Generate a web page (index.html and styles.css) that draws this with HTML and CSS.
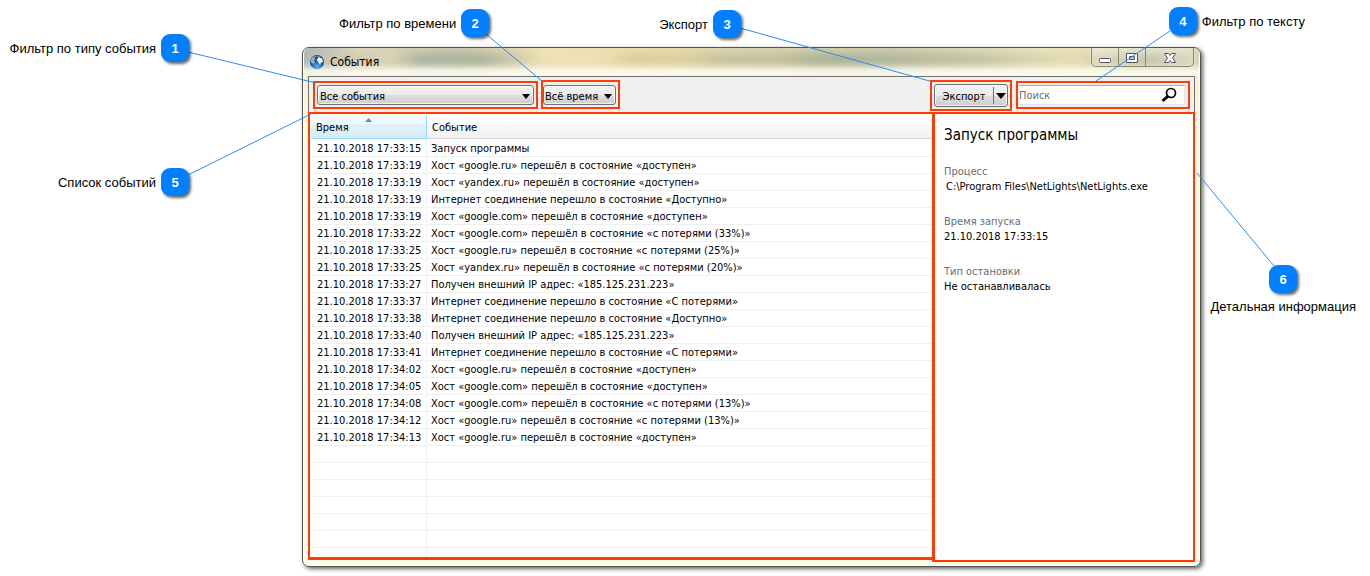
FILE: index.html
```html
<!DOCTYPE html>
<html lang="ru">
<head>
<meta charset="utf-8">
<title>События</title>
<link rel="stylesheet" href="styles.css">
</head>
<body>
<div class="stage">
  <main class="window">
    <header class="titlebar">
      <svg class="app-icon" width="16" height="16" viewBox="0 0 16 16" aria-hidden="true">
        <defs>
          <radialGradient id="globe" cx="0.5" cy="0.85" r="0.9">
            <stop offset="0" stop-color="#5fb4ee"/>
            <stop offset="0.45" stop-color="#1c5fa4"/>
            <stop offset="1" stop-color="#0a2450"/>
          </radialGradient>
        </defs>
        <circle cx="8" cy="8" r="7" fill="url(#globe)"/>
        <path d="M1.500 7Q2 3.500 4.500 2.500L6.500 4L5 6.500L6 8L4.500 10Q2.500 9.500 1.500 7Z" fill="#8fb4d2"/>
        <path d="M7.500 5.500L10 3L13 4.500L14 8L12 8.500L11 11L9.500 8.500Z" fill="#eef6fb"/>
        <path d="M4 3Q8 0 12 3Q8 2.500 4 3Z" fill="#ffffff" opacity="0.5"/>
      </svg>
      <h1 class="caption">События</h1>
      <div class="window-buttons">
        <button class="wb" type="button" aria-label="Свернуть">
          <svg width="14" height="14" viewBox="0 0 14 14"><rect x="1.500" y="7.500" width="11" height="4" rx="1" fill="#fff" stroke="#53555c"/></svg>
        </button>
        <button class="wb" type="button" aria-label="Развернуть">
          <svg width="14" height="14" viewBox="0 0 14 14"><path d="M1.500 2.500h11v9h-11zM4.500 5.500v3h5v-3z" fill="#fff" fill-rule="evenodd" stroke="#53555c"/></svg>
        </button>
        <button class="wb wb-close" type="button" aria-label="Закрыть">
          <svg width="14" height="14" viewBox="0 0 14 14"><path d="M1.500 2.500h4l1.500 2 1.500-2h4L9.500 7l3 4.500h-4L7 9.500l-1.500 2h-4L4.500 7z" fill="#fff" stroke="#53555c" stroke-linejoin="round"/></svg>
        </button>
      </div>
    </header>

    <div class="toolbar">
      <div class="mark mark-type">
        <div class="combo">
          <select aria-label="Фильтр по типу события"><option>Все события</option></select>
          <svg class="arrow" width="8" height="5" viewBox="0 0 8 5"><path d="M0 0h8L4 5z"/></svg>
        </div>
      </div>
      <div class="mark mark-time">
        <div class="combo">
          <select aria-label="Фильтр по времени"><option>Всё время</option></select>
          <svg class="arrow" width="8" height="5" viewBox="0 0 8 5"><path d="M0 0h8L4 5z"/></svg>
        </div>
      </div>
      <div class="mark mark-export">
        <div class="split">
          <button class="split-main" type="button">Экспорт</button>
          <button class="split-menu" type="button" aria-label="Варианты экспорта">
            <svg width="10" height="6" viewBox="0 0 10 6"><path d="M0 0h10L5 6z"/></svg>
          </button>
        </div>
      </div>
      <div class="mark mark-search">
        <div class="search">
          <input type="text" placeholder="Поиск" aria-label="Поиск">
          <svg width="16" height="16" viewBox="0 0 16 16" aria-hidden="true"><circle cx="10" cy="6" r="4.500" fill="none" stroke="#000" stroke-width="1.700"/><path d="M6.700 9.300L1.500 14" stroke="#000" stroke-width="3"/></svg>
        </div>
      </div>
    </div>

    <div class="panes">
      <section class="list">
        <table>
          <thead>
            <tr><th class="sorted" scope="col"><svg class="sort" width="7" height="4" viewBox="0 0 7 4"><path d="M0 4L3.500 0L7 4z" fill="#5f93ad"/></svg>Время</th><th scope="col">Событие</th></tr>
          </thead>
          <tbody>
            <tr><td>21.10.2018 17:33:15</td><td>Запуск программы</td></tr>
            <tr><td>21.10.2018 17:33:19</td><td>Хост «google.ru» перешёл в состояние «доступен»</td></tr>
            <tr><td>21.10.2018 17:33:19</td><td>Хост «yandex.ru» перешёл в состояние «доступен»</td></tr>
            <tr><td>21.10.2018 17:33:19</td><td>Интернет соединение перешло в состояние «Доступно»</td></tr>
            <tr><td>21.10.2018 17:33:19</td><td>Хост «google.com» перешёл в состояние «доступен»</td></tr>
            <tr><td>21.10.2018 17:33:22</td><td>Хост «google.com» перешёл в состояние «с потерями (33%)»</td></tr>
            <tr><td>21.10.2018 17:33:25</td><td>Хост «google.ru» перешёл в состояние «с потерями (25%)»</td></tr>
            <tr><td>21.10.2018 17:33:25</td><td>Хост «yandex.ru» перешёл в состояние «с потерями (20%)»</td></tr>
            <tr><td>21.10.2018 17:33:27</td><td>Получен внешний IP адрес: «185.125.231.223»</td></tr>
            <tr><td>21.10.2018 17:33:37</td><td>Интернет соединение перешло в состояние «С потерями»</td></tr>
            <tr><td>21.10.2018 17:33:38</td><td>Интернет соединение перешло в состояние «Доступно»</td></tr>
            <tr><td>21.10.2018 17:33:40</td><td>Получен внешний IP адрес: «185.125.231.223»</td></tr>
            <tr><td>21.10.2018 17:33:41</td><td>Интернет соединение перешло в состояние «С потерями»</td></tr>
            <tr><td>21.10.2018 17:34:02</td><td>Хост «google.ru» перешёл в состояние «доступен»</td></tr>
            <tr><td>21.10.2018 17:34:05</td><td>Хост «google.com» перешёл в состояние «доступен»</td></tr>
            <tr><td>21.10.2018 17:34:08</td><td>Хост «google.com» перешёл в состояние «с потерями (13%)»</td></tr>
            <tr><td>21.10.2018 17:34:12</td><td>Хост «google.ru» перешёл в состояние «с потерями (13%)»</td></tr>
            <tr><td>21.10.2018 17:34:13</td><td>Хост «google.ru» перешёл в состояние «доступен»</td></tr>
            <tr><td></td><td></td></tr>
            <tr><td></td><td></td></tr>
            <tr><td></td><td></td></tr>
            <tr><td></td><td></td></tr>
            <tr><td></td><td></td></tr>
            <tr><td></td><td></td></tr>
            <tr class="cut"><td></td><td></td></tr>
          </tbody>
        </table>
      </section>
      <aside class="details">
        <h2>Запуск программы</h2>
        <dl>
          <div><dt>Процесс</dt><dd class="path">C:\Program Files\NetLights\NetLights.exe</dd></div>
          <div><dt>Время запуска</dt><dd>21.10.2018 17:33:15</dd></div>
          <div><dt>Тип остановки</dt><dd>Не останавливалась</dd></div>
        </dl>
      </aside>
    </div>
  </main>

  <svg class="lines" aria-hidden="true">
    <path d="M188 52L316 83M188 175L311 114M486 34L543 82"/>
    <svg x="100%" overflow="visible"><path d="M-630 28L-437 82M-200 31L-274 81M-173 173L-96 266"/></svg>
  </svg>

  <div class="callout c1"><span>Фильтр по типу события</span><b>1</b></div>
  <div class="callout c2"><span>Фильтр по времени</span><b>2</b></div>
  <div class="callout c3"><span>Экспорт</span><b>3</b></div>
  <div class="callout c4"><b>4</b><span>Фильтр по тексту</span></div>
  <div class="callout c5"><span>Список событий</span><b>5</b></div>
  <div class="callout c6"><b>6</b><span>Детальная информация</span></div>
</div>
</body>
</html>
```
FILE: styles.css
```css
* { box-sizing: border-box; }

body {
  margin: 0;
  background: #fff;
  color: #000;
  font: 11px/15px "DejaVu Sans Condensed", "Noto Sans", sans-serif;
}

button, select, input { font: inherit; color: inherit; margin: 0; }

.stage {
  position: relative;
  padding: 47px 169px 9px 302px;
}

/* Window frame */
.window {
  padding: 0 5px 4px;
  border: 1px solid #50564f;
  border-radius: 7px;
  background: linear-gradient(#f3eccf, #fbf9e2 80px, #fdfbe8);
  box-shadow: 2px 2px 4px rgba(0, 0, 0, 0.6), inset 0 0 0 1px rgba(255, 255, 255, 0.7);
}

.titlebar {
  position: relative;
  display: flex;
  align-items: flex-start;
  height: 28px;
  margin: 0 -4px;
  padding: 0 5px 0 5px;
  overflow: hidden;
  border-radius: 6px 6px 0 0;
  background: linear-gradient(rgba(255, 255, 255, 0) 50%, rgba(255, 253, 242, 0.85) 80%), linear-gradient(90deg, #a7b8bc, #ddd7ba 6%, #cbc9ae 18%, #f0e3b7 27%, #e9dbae 40%, #ddd4ad 50%, #cfccac 65%, #eee5bd 83%, #d9d4b5);
}

.titlebar::before {
  content: "";
  position: absolute;
  inset: 6px 0 12px;
  background: linear-gradient(90deg, #c3c1ac, #d7d1b3 10%, #a3ad9a 13%, #a5af99 20%, #efe0b2 27%, #efe1b5 33%, #d8ca9a 37%, #dbcf9f 42%, #bfbe9d 47%, #c3be9e 52%, #a1ab91 58%, #a7b098 63%, #bbbfa3 75%, #e3dbb5 86%, #b1b69c 94%, #dcd7b9);
  filter: blur(4px);
}

.app-icon { position: relative; margin: 6px 5px 0 0; }

.caption {
  position: relative;
  flex: 1;
  margin: 5px 0 0;
  font-size: 12px;
  font-weight: normal;
  line-height: 18px;
}

.window-buttons {
  position: relative;
  display: flex;
  height: 19px;
  border: 1px solid #8b8871;
  border-top: 0;
  border-radius: 0 0 5px 5px;
  box-shadow: 0 0 0 1px rgba(255, 255, 255, 0.3);
}

.wb {
  display: grid;
  place-items: center;
  width: 27px;
  padding: 1px 0 0;
  border: 0;
  border-right: 1px solid #8b8871;
  background: linear-gradient(rgba(255, 255, 255, 0.3), rgba(255, 255, 255, 0.05));
}

.wb-close { width: 47px; border-right: 0; }

/* Toolbar */
.toolbar {
  display: flex;
  align-items: flex-start;
  height: 36px;
  padding: 3px 4px 0;
  border: 1px solid #6f706b;
  border-bottom: 0;
  background: #f0f0f0;
}

.mark { border: 2px solid #ff3c05; }

.mark-type { width: 225px; margin: 1px 3px 0 0; padding: 2px; }
.mark-time { width: 79px; margin-right: auto; padding: 3px 2px 2px 0; }
.mark-export { width: 82px; margin-right: 4px; padding: 2px; }
.mark-search { width: 174px; margin-top: 1px; padding: 2px 3px 2px 0; }

.combo { position: relative; height: 20px; }

.combo select {
  display: block;
  width: 100%;
  height: 100%;
  padding: 2px 20px 0 2px;
  border: 1px solid #707070;
  border-radius: 3px;
  background: linear-gradient(#f2f2f2, #ebebeb 50%, #dddddd 50%, #cfcfcf);
  box-shadow: inset 0 0 0 1px rgba(255, 255, 255, 0.7);
  appearance: none;
}

.mark-time .combo select { padding-right: 0; padding-left: 1px; }

.arrow { position: absolute; top: 9px; right: 4px; pointer-events: none; }

.split {
  display: flex;
  height: 23px;
  border: 1px solid #707070;
  border-radius: 3px;
  background: linear-gradient(#f2f2f2, #ebebeb 50%, #dddddd 50%, #cfcfcf);
  box-shadow: inset 0 0 0 1px rgba(255, 255, 255, 0.7);
}

.split button {
  display: grid;
  place-items: center;
  padding: 0;
  border: 0;
  background: none;
}

.split .split-main { flex: 1; padding-top: 2px; }

.split .split-menu {
  width: 14px;
  margin: 2px 0;
  border-left: 1px solid #707070;
}

.search {
  display: flex;
  align-items: center;
  height: 20px;
  padding-right: 7px;
  border: 1px solid #e2e3ea;
  border-top-color: #abadb3;
  border-left: 0;
  background: #fff;
}

.search input {
  flex: 1;
  min-width: 0;
  height: 18px;
  padding: 0 0 0 1px;
  border: 0;
  outline: 0;
  background: transparent;
}

.search input::placeholder { color: #6d6d6d; opacity: 1; }

/* Panes */
.panes { display: flex; }

.list {
  flex: 1;
  min-width: 0;
  margin-bottom: 3px;
  padding: 1px 0 0 1px;
  border: 2px solid #ff3c05;
  border-right: 0;
  background: #fff;
  box-shadow: 0 1px 0 #6f706b;
}

table {
  width: 100%;
  border-spacing: 0;
  table-layout: fixed;
}

th, td {
  overflow: hidden;
  text-align: left;
  font-weight: normal;
  white-space: nowrap;
}

th {
  height: 24px;
  padding: 2px 5px 0;
  border-bottom: 1px solid #d5d5d5;
  background: linear-gradient(#fff 40%, #f7f8fa 40%, #f1f2f4);
}

th.sorted {
  position: relative;
  width: 116px;
  border-right: 1px solid #96d9f9;
  border-bottom-color: #96d9f9;
  background: linear-gradient(#f2f9fc 40%, #e1f1f9 40%, #d8ecf6);
}

.sort { position: absolute; top: 3px; left: 54px; }

td {
  height: 17px;
  padding: 2px 4px 0;
  border-bottom: 1px solid #f0f0f0;
  line-height: 14px;
}

tbody tr:first-child td { height: 18px; padding-top: 3px; }

td:first-child { padding-left: 6px; border-right: 1px solid #f0f0f0; }

.cut td { height: 9px; border-bottom: 0; }

.details {
  width: 263px;
  padding: 11px 9px;
  border: 2px solid #ff3c05;
  border-left-width: 3px;
  background: #fff;
}

.details h2 {
  margin: 0 0 19px;
  font-size: 15px;
  font-weight: normal;
  line-height: 20px;
}

.details dl { display: grid; gap: 20px; margin: 0; }
.details dt { color: #6d6d6d; }
.details dd { margin: 0; white-space: nowrap; }
.details .path { padding-left: 2px; }

/* Callouts */
.lines {
  position: absolute;
  inset: 0;
  width: 100%;
  height: 100%;
  fill: none;
  stroke: #2a8cf5;
  pointer-events: none;
}

.callout {
  position: absolute;
  display: flex;
  align-items: center;
  gap: 5px;
  font: 13px/16px "Liberation Sans", Arial, sans-serif;
  white-space: nowrap;
}

.callout span { padding-top: 2px; }

.callout b {
  width: 28px;
  height: 28px;
  border-radius: 9px;
  background: #0080ff;
  box-shadow: 2px 2px 3px rgba(0, 0, 0, 0.6);
  color: #fff;
  line-height: 29px;
  text-align: center;
}

.c1, .c5 { left: 0; width: 189px; justify-content: flex-end; }
.c1 { top: 34px; }
.c5 { top: 168px; }
.c2 { top: 9px; left: 339px; }
.c3 { top: 10px; right: 629px; }
.c4 { top: 7px; right: 65px; }
.c6 { top: 265px; right: 14px; flex-direction: column; gap: 4px; }
```
